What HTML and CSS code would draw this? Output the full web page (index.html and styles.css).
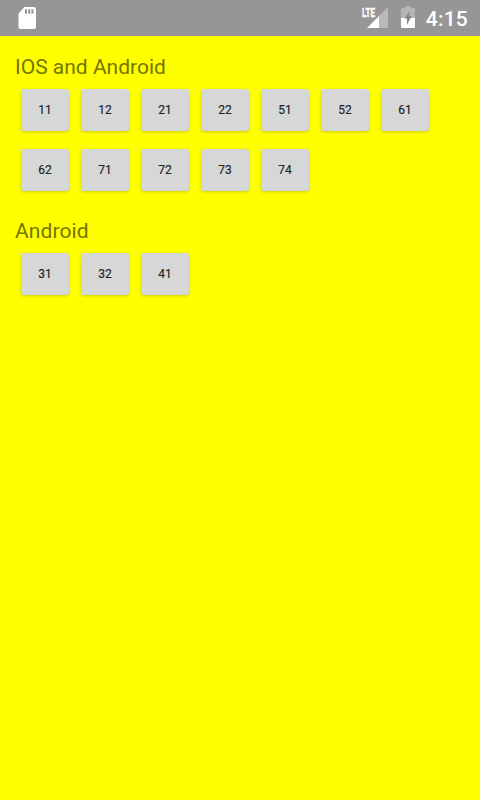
FILE: index.html
```html
<!DOCTYPE html>
<html lang="en">
<head>
<meta charset="utf-8">
<title>IOS and Android</title>
<link rel="stylesheet" href="styles.css">
</head>
<body>
<header class="status">
  <svg class="sd" width="18" height="22" viewBox="0 0 18 22"><path fill="#fff" d="M6.500 0H16a2 2 0 0 1 2 2v18a2 2 0 0 1-2 2H2.500a2 2 0 0 1-2-2V6.500z"/><path fill="#969696" d="M7 2.300h2v4.400H7zM10.200 2.300h2v4.400h-2zM13.400 2.300h2v4.400h-2z"/></svg>
  <svg class="signal" width="28" height="22" viewBox="0 0 28 22"><path fill="#b9b9b9" d="M26 1v21h-9V10z"/><path fill="#fff" d="M17 10v12H5z"/><text class="lte" x="0" y="11" textLength="13" lengthAdjust="spacingAndGlyphs">LTE</text></svg>
  <svg class="battery" width="14" height="22" viewBox="0 0 14 22"><path fill="#b4b4b4" d="M4 0h6v2h2.800Q14 2 14 3.200V12H0V3.200Q0 2 1.200 2H4z"/><path fill="#fff" d="M0 12h14v8.800q0 1.200-1.200 1.200H1.200Q0 22 0 20.800z"/><path fill="#858585" d="M9 5l-1 5h2.500L6 19v-6.500H3.500z"/></svg>
  <span class="clock">4:15</span>
</header>
<main>
  <section>
    <h2>IOS and Android</h2>
    <div class="grid">
      <button>11</button><button>12</button><button>21</button><button>22</button><button>51</button><button>52</button><button>61</button>
      <button>62</button><button>71</button><button>72</button><button>73</button><button>74</button>
    </div>
  </section>
  <section>
    <h2 class="android">Android</h2>
    <div class="grid">
      <button>31</button><button>32</button><button>41</button>
    </div>
  </section>
</main>
</body>
</html>
```
FILE: styles.css
```css
* { box-sizing: border-box; }
body {
  margin: 0;
  min-height: 800px;
  background: #ff0;
  font-family: Roboto, sans-serif;
}
.status {
  display: flex;
  height: 36px;
  padding: 0 12px 0 18px;
  background: #969696;
  color: #fff;
}
.status svg { display: block; overflow: visible; }
.sd { margin-top: 7px; }
.signal { margin: 6px 0 0 auto; }
.battery { margin: 6px 0 0 11px; }
.lte { font: 700 13px Roboto, sans-serif; fill: #fff; stroke: #fff; stroke-width: .3px; }
.clock {
  margin-left: 11px;
  font-size: 21px;
  font-weight: 500;
  line-height: 38px;
  letter-spacing: .2px;
}
main { padding: 15px 15px 0; }
section { margin-bottom: 24px; }
h2 {
  margin: 0;
  font-size: 21px;
  font-weight: 400;
  line-height: 32px;
  color: #757500;
}
.android { letter-spacing: .1px; }
.grid {
  display: grid;
  grid-template-columns: repeat(7, 48px);
  gap: 18px 12px;
  padding: 6px 6px 0;
}
button {
  height: 42px;
  padding: 0;
  border: 0;
  border-radius: 3px;
  background: #d6d7d7;
  box-shadow: 0 1px 3px rgba(0, 0, 0, .2);
  font: 400 12px Roboto, sans-serif;
  -webkit-text-stroke: .15px #212121;
  color: #212121;
}
```
